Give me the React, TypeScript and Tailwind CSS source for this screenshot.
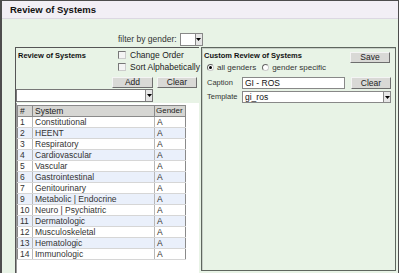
const ROWS = [
  { n: "1", name: "Constitutional" },
  { n: "2", name: "HEENT" },
  { n: "3", name: "Respiratory" },
  { n: "4", name: "Cardiovascular" },
  { n: "5", name: "Vascular" },
  { n: "6", name: "Gastrointestinal" },
  { n: "7", name: "Genitourinary" },
  { n: "9", name: "Metabolic | Endocrine" },
  { n: "10", name: "Neuro | Psychiatric" },
  { n: "11", name: "Dermatologic" },
  { n: "12", name: "Musculoskeletal" },
  { n: "13", name: "Hematologic" },
  { n: "14", name: "Immunologic" },
];

function Arrow() {
  return (
    <div className="w-[7px] h-full bg-[#e6e6e6] border-l border-[#888] flex items-center justify-center">
      <svg width="5" height="3" viewBox="0 0 5 3">
        <path d="M0 0h5L2.5 3z" fill="#000" />
      </svg>
    </div>
  );
}

function Btn({ label, className }: { label: string; className: string }) {
  return (
    <div
      className={`flex items-center justify-center bg-[#d9d9d6] border border-[#f4f4f4] border-r-[#6e6e6e] border-b-[#6e6e6e] text-[8.5px] text-[#222] ${className}`}
    >
      {label}
    </div>
  );
}

function Check({ label }: { label: string }) {
  return (
    <div className="flex items-center h-[12px] whitespace-nowrap">
      <div className="w-[8px] h-[8px] shrink-0 bg-[#f4f4f4] border border-[#777] border-r-[#ccc] border-b-[#ccc] ml-[6px]" />
      <span className="ml-[4px]">{label}</span>
    </div>
  );
}

function Radio({ checked }: { checked?: boolean }) {
  return (
    <div className="w-[7px] h-[7px] rounded-full bg-white border border-[#666] border-r-[#ccc] border-b-[#ccc] flex items-center justify-center">
      {checked && <div className="w-[3px] h-[3px] rounded-full bg-black" />}
    </div>
  );
}

export default function App() {
  return (
    <div
      className="w-[399px] h-[273px] overflow-hidden bg-[#e8f3e6] border-l-2 border-t border-r border-[#4d4d4d] text-[8.5px] text-[#222] leading-none"
      style={{ fontFamily: '"Liberation Sans", Arial, sans-serif' }}
    >
      <div className="h-[18px] bg-[#f2eff5] border-b border-[#dcd8e2] flex items-center pl-[8px]">
        <span className="font-bold text-[9.5px] text-[#111]">Review of Systems</span>
      </div>

      <div className="flex items-center h-[13px] mt-[14px] pl-[116px]">
        <span className="text-[#333]">filter by gender:</span>
        <div className="ml-[3px] flex h-[13px] w-[23px] bg-white border border-[#888]">
          <div className="flex-1" />
          <Arrow />
        </div>
      </div>

      <div className="flex mt-[1px] h-[226px]">
        <div className="ml-[13px] w-[184px] h-full border-l border-t border-[#555] flex flex-col">
          <div className="flex h-[41px]">
            <div className="flex-1 pl-[2px] pt-[4px] font-bold text-[7.5px] text-[#111]">Review of Systems</div>
            <div className="w-[87px] pt-[1px] flex flex-col">
              <Check label="Change Order" />
              <Check label="Sort Alphabetically" />
              <div className="flex gap-[4px] mt-[4px]">
                <Btn label="Add" className="w-[41px] h-[11px]" />
                <Btn label="Clear" className="w-[40px] h-[11px]" />
              </div>
            </div>
          </div>
          <div className="flex h-[13px] w-[137px] bg-white border border-[#777]">
            <div className="flex-1" />
            <Arrow />
          </div>
          <div className="flex-1 bg-white border-l border-[#9a9a9a] mt-[1px] pt-[2px]">
            <table className="border-collapse w-[168px] table-fixed">
              <colgroup>
                <col className="w-[15px]" />
                <col className="w-[122px]" />
                <col className="w-[31px]" />
              </colgroup>
              <thead>
                <tr className="h-[11px] bg-[#d6d6d3]">
                  <th className="border border-[#8a8a8a] font-normal text-left pl-[2px]">#</th>
                  <th className="border border-[#8a8a8a] font-normal text-left pl-[2px]">System</th>
                  <th className="border border-[#8a8a8a] font-normal text-left pl-[1px] text-[8px] whitespace-nowrap">Gender</th>
                </tr>
              </thead>
              <tbody>
                {ROWS.map((r, i) => (
                  <tr key={r.n} className={`h-[11px] ${i % 2 === 1 ? "bg-[#eaf0fb]" : "bg-white"}`}>
                    <td className="border-l border-[#8a8a8a] border-b border-b-[#d6d6d6] pl-[2px] text-[#333]">{r.n}</td>
                    <td className="border-l border-[#b8b8b8] border-b border-b-[#d6d6d6] pl-[2px] text-[#333]">{r.name}</td>
                    <td className="border-l border-r border-[#b8b8b8] border-r-[#8a8a8a] border-b border-b-[#d6d6d6] pl-[2px] text-[#333]">A</td>
                  </tr>
                ))}
                <tr className="h-0">
                  <td colSpan={3} className="border-t border-[#8a8a8a]" />
                </tr>
              </tbody>
            </table>
          </div>
        </div>

        <div className="ml-[2px] w-[195px] h-[224px] border border-[#5e665e] shadow-[inset_1px_1px_0_#c8d0c8] flex flex-col pl-[2px]">
          <div className="flex h-[15px]">
            <div className="flex-1 pt-[4px] font-bold text-[7.5px] text-[#111]">Custom Review of Systems</div>
            <Btn label="Save" className="w-[40px] h-[11px] mt-[4px] mr-[5px]" />
          </div>
          <div className="flex items-center h-[9px] pl-[3px] text-[#333] text-[8px]">
            <Radio checked />
            <span className="ml-[3px]">all genders</span>
            <div className="ml-[6px]"><Radio /></div>
            <span className="ml-[3px]">gender specific</span>
          </div>
          <div className="flex items-center h-[12px] mt-[5px] pl-[3px]">
            <span className="w-[35px] text-[#333] text-[7.5px]">Caption</span>
            <div className="w-[103px] h-[12px] bg-white border border-[#888] flex items-center pl-[2px] text-[#111]">GI - ROS</div>
            <Btn label="Clear" className="w-[40px] h-[12px] ml-[6px]" />
          </div>
          <div className="flex items-center h-[12px] mt-[2px] pl-[3px]">
            <span className="w-[35px] text-[#333] text-[7.5px]">Template</span>
            <div className="flex w-[149px] h-[12px] bg-white border border-[#888]">
              <div className="flex-1 flex items-center pl-[2px] text-[#111]">gi_ros</div>
              <Arrow />
            </div>
          </div>
        </div>
      </div>
    </div>
  );
}
